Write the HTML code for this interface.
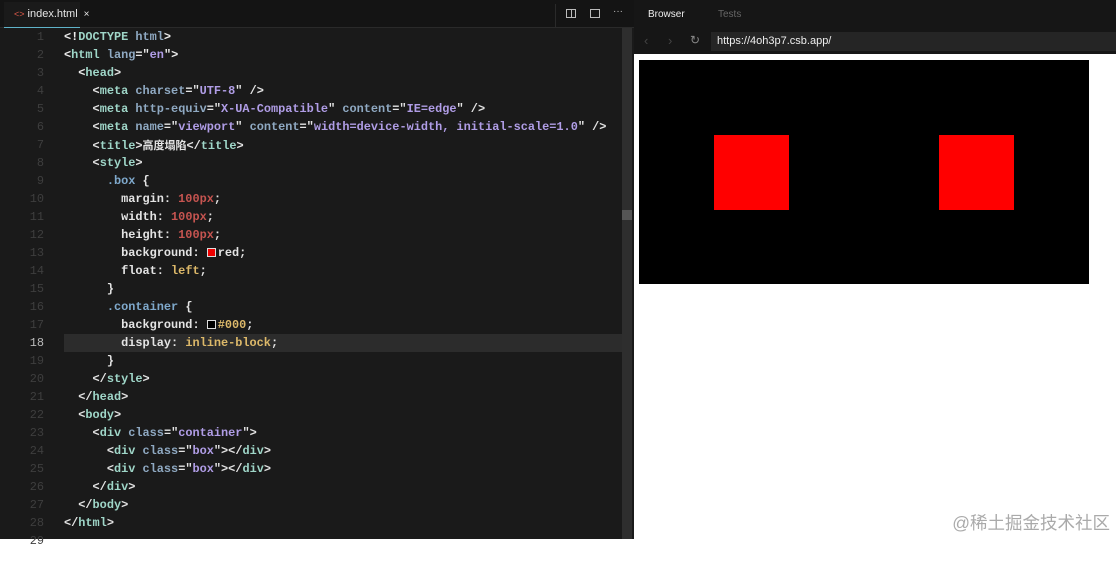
<!DOCTYPE html>
<html><head><meta charset="utf-8">
<style>
*{margin:0;padding:0;box-sizing:border-box}
body{width:1116px;height:539px;overflow:hidden;background:#fff;font-family:"Liberation Sans",sans-serif;position:relative}
#ed{position:absolute;left:0;top:0;width:634px;height:539px;background:#1a1a1a}
#tabbar{position:absolute;left:0;top:0;width:634px;height:28px;background:#141414;border-bottom:1px solid #2a2a2a}
#tab{position:absolute;left:4px;top:2px;width:76px;height:26px;background:#1a1a1a;border-bottom:1px solid #5fb3c9;color:#e6e6e6;font-size:11px;line-height:25px;padding-left:10px}
#tab .i{color:#e05a4a;font-size:9px;margin-right:3px}
#tab .x{margin-left:6px;font-size:10px}
.ic{position:absolute;top:9px;width:10px;height:9px;border:1px solid #bbb}
#code{position:absolute;left:0;top:28px;font-family:"Liberation Mono",monospace;font-size:11.9px;line-height:18px;white-space:pre;color:#e4e4e4;font-weight:bold}
.ln{position:absolute;left:0;width:44px;text-align:right;color:#3e3e3e;font-weight:normal}
.l{position:absolute;left:64px}
.t{color:#9fd6c8}.a{color:#8fa9c2}.s{color:#b09de6}.c{color:#7fa9cc}.n{color:#c65450}.k{color:#dcb869}.w{color:#ededed}
.sw{display:inline-block;width:9px;height:9px;border:1px solid #ddd;vertical-align:-1px;margin-right:2px}
#cur{position:absolute;left:64px;top:334px;width:558px;height:18px;background:#2c2c2c}
#sb{position:absolute;left:622px;top:28px;width:10px;height:511px;background:#2e2e2e}
#sb2{position:absolute;left:622px;top:210px;width:10px;height:10px;background:#555}
#br{position:absolute;left:634px;top:0;width:482px;height:54px;background:#161616}
#url{position:absolute;left:711px;top:32px;width:405px;height:19px;background:#252525;color:#eee;font-size:11px;line-height:19px;padding-left:6px}
#box{position:absolute;left:639px;top:60px;width:450px;height:224px;background:#000}
.r{position:absolute;top:135px;width:75px;height:75px;background:#f00}
#wm{position:absolute;right:6px;top:510px;color:#aaa;font-family:"Liberation Sans","Noto Sans CJK SC",sans-serif;font-size:17.5px}
</style></head><body>
<div id="ed">
<div id="tabbar"><div id="tab"><span class="i">&lt;&gt;</span>index.html<span class="x">×</span></div>
<div style="position:absolute;left:555px;top:4px;width:1px;height:24px;background:#2a2a2a"></div>
<div class="ic" style="left:566px"></div><div style="position:absolute;left:571px;top:9px;width:1px;height:9px;background:#bbb"></div>
<div class="ic" style="left:590px"></div>
<div style="position:absolute;left:613px;top:6px;color:#bbb;font-size:10px">···</div>
</div>
<div id="cur"></div>
<div id="code">
<div class="ln" style="top:0">1</div><div class="ln" style="top:18px">2</div><div class="ln" style="top:36px">3</div><div class="ln" style="top:54px">4</div><div class="ln" style="top:72px">5</div><div class="ln" style="top:90px">6</div><div class="ln" style="top:108px">7</div><div class="ln" style="top:126px">8</div><div class="ln" style="top:144px">9</div><div class="ln" style="top:162px">10</div><div class="ln" style="top:180px">11</div><div class="ln" style="top:198px">12</div><div class="ln" style="top:216px">13</div><div class="ln" style="top:234px">14</div><div class="ln" style="top:252px">15</div><div class="ln" style="top:270px">16</div><div class="ln" style="top:288px">17</div><div class="ln" style="top:306px;color:#bbb">18</div><div class="ln" style="top:324px">19</div><div class="ln" style="top:342px">20</div><div class="ln" style="top:360px">21</div><div class="ln" style="top:378px">22</div><div class="ln" style="top:396px">23</div><div class="ln" style="top:414px">24</div><div class="ln" style="top:432px">25</div><div class="ln" style="top:450px">26</div><div class="ln" style="top:468px">27</div><div class="ln" style="top:486px">28</div><div class="ln" style="top:504px">29</div>
<div class="l" style="top:0"><span class="w">&lt;!</span><span class="t">DOCTYPE</span> <span class="a">html</span><span class="w">&gt;</span></div>
<div class="l" style="top:18px"><span class="w">&lt;</span><span class="t">html</span> <span class="a">lang</span>=<span class="w">"</span><span class="s">en</span><span class="w">"&gt;</span></div>
<div class="l" style="top:36px">  <span class="w">&lt;</span><span class="t">head</span>&gt;</div>
<div class="l" style="top:54px">    &lt;<span class="t">meta</span> <span class="a">charset</span>="<span class="s">UTF-8</span>" /&gt;</div>
<div class="l" style="top:72px">    &lt;<span class="t">meta</span> <span class="a">http-equiv</span>="<span class="s">X-UA-Compatible</span>" <span class="a">content</span>="<span class="s">IE=edge</span>" /&gt;</div>
<div class="l" style="top:90px">    &lt;<span class="t">meta</span> <span class="a">name</span>="<span class="s">viewport</span>" <span class="a">content</span>="<span class="s">width=device-width, initial-scale=1.0</span>" /&gt;</div>
<div class="l" style="top:108px">    &lt;<span class="t">title</span>&gt;<span style="font-family:'Noto Sans CJK SC',sans-serif;font-size:11px">高度塌陷</span>&lt;/<span class="t">title</span>&gt;</div>
<div class="l" style="top:126px">    &lt;<span class="t">style</span>&gt;</div>
<div class="l" style="top:144px">      <span class="c">.box</span> {</div>
<div class="l" style="top:162px">        margin: <span class="n">100px</span>;</div>
<div class="l" style="top:180px">        width: <span class="n">100px</span>;</div>
<div class="l" style="top:198px">        height: <span class="n">100px</span>;</div>
<div class="l" style="top:216px">        background: <span class="sw" style="background:#e00"></span>red;</div>
<div class="l" style="top:234px">        float: <span class="k">left</span>;</div>
<div class="l" style="top:252px">      }</div>
<div class="l" style="top:270px">      <span class="c">.container</span> {</div>
<div class="l" style="top:288px">        background: <span class="sw" style="background:#000"></span><span class="k">#000</span>;</div>
<div class="l" style="top:306px">        display: <span class="k">inline-block</span>;</div>
<div class="l" style="top:324px">      }</div>
<div class="l" style="top:342px">    &lt;/<span class="t">style</span>&gt;</div>
<div class="l" style="top:360px">  &lt;/<span class="t">head</span>&gt;</div>
<div class="l" style="top:378px">  &lt;<span class="t">body</span>&gt;</div>
<div class="l" style="top:396px">    &lt;<span class="t">div</span> <span class="a">class</span>="<span class="s">container</span>"&gt;</div>
<div class="l" style="top:414px">      &lt;<span class="t">div</span> <span class="a">class</span>="<span class="s">box</span>"&gt;&lt;/<span class="t">div</span>&gt;</div>
<div class="l" style="top:432px">      &lt;<span class="t">div</span> <span class="a">class</span>="<span class="s">box</span>"&gt;&lt;/<span class="t">div</span>&gt;</div>
<div class="l" style="top:450px">    &lt;/<span class="t">div</span>&gt;</div>
<div class="l" style="top:468px">  &lt;/<span class="t">body</span>&gt;</div>
<div class="l" style="top:486px">&lt;/<span class="t">html</span>&gt;</div>
</div>
<div id="sb"></div><div id="sb2"></div>
</div>
<div id="br">
<div style="position:absolute;left:14px;top:9px;color:#eee;font-size:10px">Browser</div>
<div style="position:absolute;left:84px;top:9px;color:#666;font-size:10px">Tests</div>
<div style="position:absolute;left:10px;top:33px;color:#444;font-size:13px">‹</div>
<div style="position:absolute;left:34px;top:33px;color:#444;font-size:13px">›</div>
<div style="position:absolute;left:56px;top:33px;color:#888;font-size:12px">↻</div>
</div>
<div id="url">https://4oh3p7.csb.app/</div>
<div id="box"></div>
<div class="r" style="left:714px"></div><div class="r" style="left:939px"></div>
<div id="wm">@稀土掘金技术社区</div>
</body></html>
